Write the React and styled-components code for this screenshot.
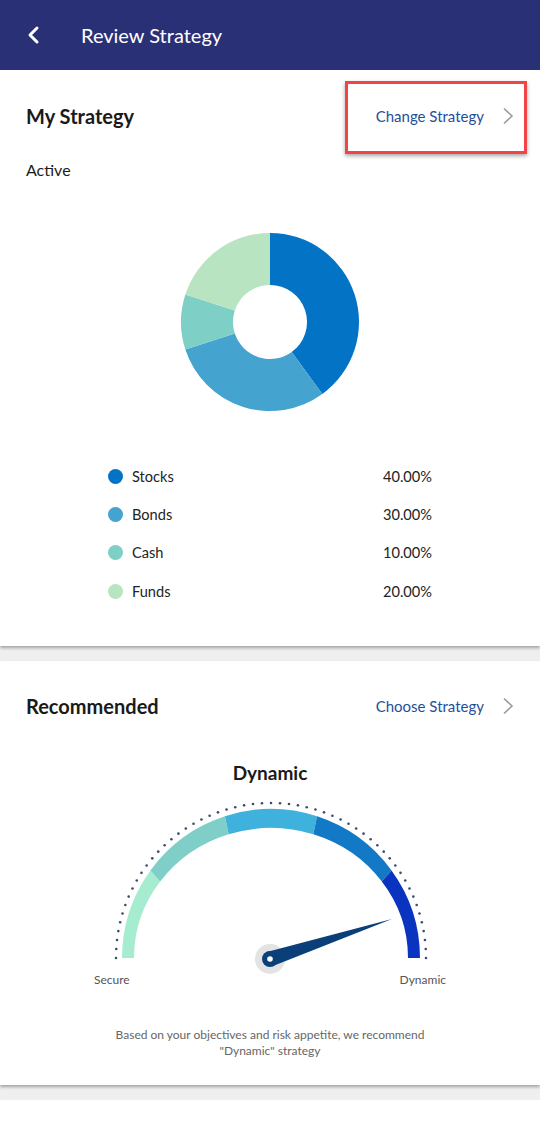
import React from "react";
import styled, { createGlobalStyle } from "styled-components";

const GlobalStyle = createGlobalStyle`
  * { box-sizing: border-box; }
  body {
    margin: 0;
    background: #efefef;
    font-family: Lato, "Open Sans", sans-serif;
    color: #1c1c1c;
  }
`;

const allocation = [
  { label: "Stocks", value: 40, color: "#0373c6" },
  { label: "Bonds", value: 30, color: "#44a3cf" },
  { label: "Cash", value: 10, color: "#7ecfc6" },
  { label: "Funds", value: 20, color: "#b8e4c1" },
];

const gaugeBands = ["#a6ecd0", "#7fcec7", "#3eb2dc", "#1179c6", "#0a33bf"];

const polar = (cx, cy, r, deg) => {
  const a = ((deg - 90) * Math.PI) / 180;
  return [cx + r * Math.cos(a), cy + r * Math.sin(a)];
};

const donutSlice = (start, end, R, r, c) => {
  const [x1, y1] = polar(c, c, R, start);
  const [x2, y2] = polar(c, c, R, end);
  const [x3, y3] = polar(c, c, r, end);
  const [x4, y4] = polar(c, c, r, start);
  const large = end - start > 180 ? 1 : 0;
  return `M${x1} ${y1} A${R} ${R} 0 ${large} 1 ${x2} ${y2} L${x3} ${y3} A${r} ${r} 0 ${large} 0 ${x4} ${y4} Z`;
};

// angles in maths convention: 180 = left, 0 = right
const gaugeBand = (a1, a2, cx, cy, R, rx, ry) => {
  const rad = (d) => (d * Math.PI) / 180;
  const o1 = [cx + R * Math.cos(rad(a1)), cy - R * Math.sin(rad(a1))];
  const o2 = [cx + R * Math.cos(rad(a2)), cy - R * Math.sin(rad(a2))];
  const i2 = [cx + rx * Math.cos(rad(a2)), cy - ry * Math.sin(rad(a2))];
  const i1 = [cx + rx * Math.cos(rad(a1)), cy - ry * Math.sin(rad(a1))];
  return `M${o1[0]} ${o1[1]} A${R} ${R} 0 0 1 ${o2[0]} ${o2[1]} L${i2[0]} ${i2[1]} A${rx} ${ry} 0 0 0 ${i1[0]} ${i1[1]} Z`;
};

const Page = styled.div`
  min-height: 1121px;
  background: #efefef;
`;

const TopBar = styled.header`
  height: 70px;
  background: #2a3076;
  display: flex;
  align-items: center;
  padding-left: 25px;
  gap: 40px;
  color: #fff;
`;

const BarTitle = styled.h1`
  margin: 0;
  font-size: 20px;
  font-weight: 400;
`;

const Card = styled.section`
  background: #fff;
  box-shadow: 0 2px 3px rgba(0, 0, 0, 0.32);
  margin-bottom: ${(p) => p.$gap || 0}px;
  padding-top: ${(p) => p.$top}px;
  padding-bottom: ${(p) => p.$bottom}px;
`;

const CardHead = styled.div`
  height: 40px;
  display: flex;
  align-items: center;
  justify-content: space-between;
  padding: 0 26px;
`;

const CardTitle = styled.h2`
  margin: 0;
  font-size: 20px;
  font-weight: 700;
  color: #1a1a1a;
`;

const LinkAction = styled.a`
  position: relative;
  display: flex;
  align-items: center;
  gap: 18px;
  height: 20px;
  font-size: 15px;
  color: #1f4f9b;
  text-decoration: none;

  ${(p) =>
    p.$highlight &&
    `
    &::after {
      content: "";
      position: absolute;
      left: -31px;
      right: -13px;
      top: -25px;
      bottom: -28px;
      border: 3px solid #f14446;
      box-shadow: 0 2px 4px rgba(0, 0, 0, 0.35);
      pointer-events: none;
    }
  `}
`;

const Status = styled.p`
  margin: 24px 0 0 26px;
  font-size: 16px;
  line-height: 20px;
`;

const ChartWrap = styled.div`
  display: flex;
  justify-content: center;
  margin-top: ${(p) => p.$mt}px;
`;

const Legend = styled.ul`
  list-style: none;
  width: 324px;
  margin: 45px auto 0;
  padding: 0;
`;

const LegendRow = styled.li`
  height: 38.3px;
  display: flex;
  align-items: center;
  font-size: 14.6px;
  color: #232323;
`;

const Dot = styled.span`
  width: 15px;
  height: 15px;
  border-radius: 50%;
  background: ${(p) => p.$color};
  margin-right: 9px;
`;

const LegendValue = styled.span`
  margin-left: auto;
`;

const GaugeTitle = styled.h3`
  margin: 35px 0 0;
  text-align: center;
  font-size: 19px;
  line-height: 24px;
  font-weight: 700;
  color: #1a1a1a;
`;

const GaugeLabels = styled.div`
  width: 352px;
  margin: -3px auto 0;
  display: flex;
  justify-content: space-between;
  font-size: 12px;
  line-height: 16px;
  color: #555;
`;

const Note = styled.p`
  margin: 39px auto 0;
  width: 340px;
  text-align: center;
  font-size: 12px;
  line-height: 16px;
  color: #666;
`;

const Filler = styled.div`
  background: #fff;
  height: 21px;
`;

const Chevron = ({ color = "#9a9a9a" }) => (
  <svg width="12" height="18" viewBox="0 0 12 18">
    <polyline points="2,1.5 10,9 2,16.5" fill="none" stroke={color} strokeWidth="1.6" />
  </svg>
);

const BackIcon = () => (
  <svg width="16" height="20" viewBox="0 0 16 20">
    <polyline points="12,3 5,10 12,17" fill="none" stroke="#fff" strokeWidth="3" strokeLinecap="round" strokeLinejoin="round" />
  </svg>
);

const Donut = () => {
  let acc = 0;
  return (
    <svg width="180" height="180" viewBox="0 0 180 180">
      {allocation.map((s) => {
        const start = (acc / 100) * 360;
        acc += s.value;
        const end = (acc / 100) * 360;
        return <path key={s.label} d={donutSlice(start, end, 89, 37, 90)} fill={s.color} />;
      })}
    </svg>
  );
};

const Gauge = () => {
  const cx = 181;
  const cy = 163;
  const dots = [];
  for (let i = 0; i <= 54; i++) {
    const a = (Math.PI * i) / 54;
    dots.push(<circle key={i} cx={cx + 155 * Math.cos(a)} cy={cy - 155 * Math.sin(a)} r="1.3" fill="#3d4b6d" />);
  }
  const px = 180;
  const py = 164;
  const tip = [302, 124];
  const len = Math.hypot(tip[0] - px, tip[1] - py);
  const nx = -(tip[1] - py) / len;
  const ny = (tip[0] - px) / len;
  return (
    <svg width="360" height="180" viewBox="0 0 360 180" style={{ display: "block", margin: "10px auto 0" }}>
      {dots}
      {gaugeBands.map((c, i) => (
        <path key={c} d={gaugeBand(180 - i * 36, 144 - i * 36, cx, cy, 149, 137, 130)} fill={c} />
      ))}
      <circle cx={px} cy={py} r="15" fill="#e3e3e3" />
      <polygon points={`${px + nx * 7.5},${py + ny * 7.5} ${tip[0]},${tip[1]} ${px - nx * 7.5},${py - ny * 7.5}`} fill="#0a3f7a" />
      <circle cx={px} cy={py} r="8" fill="#0a3f7a" />
      <circle cx={px} cy={py} r="2.8" fill="#fff" />
    </svg>
  );
};

export default function App() {
  return (
    <Page>
      <GlobalStyle />
      <TopBar>
        <BackIcon />
        <BarTitle>Review Strategy</BarTitle>
      </TopBar>

      <Card $top={26} $bottom={36} $gap={15}>
        <CardHead>
          <CardTitle>My Strategy</CardTitle>
          <LinkAction href="#" $highlight>
            Change Strategy
            <Chevron />
          </LinkAction>
        </CardHead>
        <Status>Active</Status>
        <ChartWrap $mt={52}>
          <Donut />
        </ChartWrap>
        <Legend>
          {allocation.map((s) => (
            <LegendRow key={s.label}>
              <Dot $color={s.color} />
              {s.label}
              <LegendValue>{s.value.toFixed(2)}%</LegendValue>
            </LegendRow>
          ))}
        </Legend>
      </Card>

      <Card $top={25} $bottom={26} $gap={15}>
        <CardHead>
          <CardTitle>Recommended</CardTitle>
          <LinkAction href="#">
            Choose Strategy
            <Chevron />
          </LinkAction>
        </CardHead>
        <GaugeTitle>Dynamic</GaugeTitle>
        <Gauge />
        <GaugeLabels>
          <span>Secure</span>
          <span>Dynamic</span>
        </GaugeLabels>
        <Note>
          Based on your objectives and risk appetite, we recommend "Dynamic" strategy
        </Note>
      </Card>
      <Filler />
    </Page>
  );
}
